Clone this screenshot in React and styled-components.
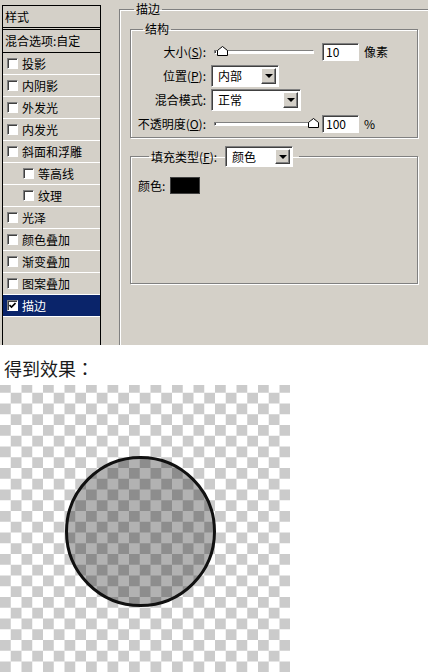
import styled, { createGlobalStyle } from 'styled-components';

const GlobalStyle = createGlobalStyle`
  html, body {
    margin: 0;
    padding: 0;
    background: #fff;
  }
  body {
    font-family: "Noto Sans CJK SC", "Noto Sans", sans-serif;
  }
  * {
    box-sizing: border-box;
  }
`;

const Page = styled.div`
  width: 428px;
  height: 672px;
  overflow: hidden;
  background: #fff;
`;

/* ---- layer style dialog ---- */

const Dialog = styled.div`
  display: flex;
  align-items: flex-start;
  height: 345px;
  overflow: hidden;
  background: #d4d0c8;
  color: #000;
  font-size: 12px;
  line-height: 14px;
`;

const StyleList = styled.div`
  flex: none;
  width: 99px;
  height: 345px;
  margin: 5px 0 0 2px;
  border: 1px solid #000;
  border-bottom: 0;
`;

const ListHeader = styled.div`
  display: flex;
  align-items: center;
  height: ${(p) => (p.$double ? 24 : 23)}px;
  padding-left: 2px;
  border-bottom: ${(p) => (p.$double ? '3px double #000' : '1px solid #000')};
`;

const ListItem = styled.div`
  display: flex;
  align-items: center;
  gap: 4px;
  height: 22px;
  padding-left: ${(p) => (p.$indent ? 20 : 4)}px;
  border-bottom: 1px solid #fff;
  background: ${(p) => (p.$active ? '#0a246a' : 'transparent')};
  color: ${(p) => (p.$active ? '#fff' : '#000')};
`;

const CheckBox = styled.span`
  flex: none;
  display: flex;
  align-items: center;
  justify-content: center;
  width: 11px;
  height: 11px;
  background: #fff;
  border: 1px solid;
  border-color: #808080 #fff #fff #808080;
  box-shadow: inset 1px 1px 0 #404040;
`;

const Group = styled.fieldset`
  margin: 0;
  padding: 0;
  min-width: 0;
  border: 1px solid #808080;
  box-shadow: inset 1px 1px 0 #fff, 1px 1px 0 #fff;
`;

const GroupTitle = styled.legend`
  display: flex;
  align-items: center;
  gap: 8px;
  margin-left: ${(p) => p.$offset}px;
  padding: ${(p) => (p.$wide ? '0 6px 0 2px' : '0 2px')};
  line-height: 14px;
`;

const StrokeGroup = styled(Group)`
  flex: none;
  width: 340px;
  height: 380px;
  margin: 2px 0 0 18px;
  padding: 6px 0 0 10px;
`;

const StructureGroup = styled(Group)`
  width: 288px;
  padding-bottom: 1px;
`;

const FillGroup = styled(Group)`
  width: 288px;
  margin-top: 8px;
`;

const FieldGrid = styled.div`
  display: grid;
  grid-template-columns: 75px auto;
  grid-auto-rows: 24px;
  column-gap: 5px;
  align-items: center;
  padding-top: 4px;
`;

const Label = styled.span`
  text-align: right;
  white-space: nowrap;
`;

const Controls = styled.div`
  display: flex;
  align-items: center;
  gap: 5px;
`;

const Slider = styled.div`
  position: relative;
  display: flex;
  align-items: center;
  width: 106px;
  height: 14px;
  padding-left: 3px;
`;

const Track = styled.div`
  width: 100px;
  height: 4px;
  background: #fff;
  border: 1px solid;
  border-color: #808080 #fff #fff #808080;
  box-shadow: inset 1px 0 0 #404040;
`;

const Thumb = styled.svg`
  position: absolute;
  top: 1px;
  left: ${(p) => p.$pos}px;
`;

const NumberBox = styled.div`
  width: 37px;
  height: 18px;
  padding-left: 3px;
  background: #fff;
  border: 1px solid;
  border-color: #808080 #fff #fff #808080;
  box-shadow: inset 1px 1px 0 #404040;
  line-height: 16px;
`;

const Select = styled.div`
  display: flex;
  align-items: center;
  justify-content: space-between;
  width: ${(p) => p.$width}px;
  height: ${(p) => p.$height || 22}px;
  padding: 2px 2px 2px 6px;
  background: #fff;
  border: 1px solid;
  border-color: #808080 #fff #fff #808080;
  box-shadow: inset 1px 1px 0 #404040;
`;

const DropButton = styled.span`
  display: flex;
  align-items: center;
  justify-content: center;
  width: 15px;
  height: 100%;
  background: #d4d0c8;
  border: 1px solid;
  border-color: #fff #404040 #404040 #fff;
  box-shadow: inset -1px -1px 0 #808080;

  &::after {
    content: '';
    border-left: 4px solid transparent;
    border-right: 4px solid transparent;
    border-top: 4px solid #000;
  }
`;

const FillBody = styled.div`
  display: flex;
  align-items: flex-start;
  gap: 5px;
  height: 116px;
  padding: 10px 0 0 7px;
`;

const ColorLabel = styled.span`
  line-height: 17px;
`;

const Swatch = styled.div`
  width: 30px;
  height: 17px;
  background: #000;
  border: 1px solid #404040;
`;

/* ---- result preview ---- */

const Caption = styled.div`
  height: 40px;
  padding: 6px 0 0 4px;
  font-size: 18px;
  line-height: 34px;
  color: #1b1b1b;
`;

const Colon = styled.span`
  font-family: "Noto Sans CJK TC", "Noto Sans CJK SC", sans-serif;
`;

const Preview = styled.div`
  width: 290px;
  height: 287px;
  padding: 71px 0 0 65px;
  background-color: #fff;
  background-image: conic-gradient(#fff 25%, #cbcbcb 0 50%, #fff 0 75%, #cbcbcb 0);
  background-size: 21.5px 21.5px;
  background-position: 0 -3px;
`;

const Circle = styled.div`
  width: 151px;
  height: 151px;
  border-radius: 50%;
  border: 3px solid #111;
  background: rgba(0, 0, 0, 0.3);
`;

const effects = [
  { name: '投影' },
  { name: '内阴影' },
  { name: '外发光' },
  { name: '内发光' },
  { name: '斜面和浮雕' },
  { name: '等高线', indent: true },
  { name: '纹理', indent: true },
  { name: '光泽' },
  { name: '颜色叠加' },
  { name: '渐变叠加' },
  { name: '图案叠加' },
  { name: '描边', checked: true },
];

const SliderThumb = ({ pos }) => (
  <Thumb $pos={pos} width="11" height="10" viewBox="0 0 11 10">
    <path d="M0.5 9.5 V4.5 L5.5 0.5 L10.5 4.5 V9.5 Z" fill="#fff" stroke="#000" />
    <path d="M1.5 8.5 V5 L5.5 1.8" fill="none" stroke="#fff" />
  </Thumb>
);

const Check = () => (
  <svg width="7" height="7" viewBox="0 0 7 7">
    <path d="M0.5 3 L2.5 5 L6.5 1" fill="none" stroke="#000" strokeWidth="1.6" />
  </svg>
);

export default function App() {
  return (
    <Page>
      <GlobalStyle />
      <Dialog>
        <StyleList>
          <ListHeader $double>样式</ListHeader>
          <ListHeader>混合选项:自定</ListHeader>
          {effects.map((fx) => (
            <ListItem key={fx.name} $indent={fx.indent} $active={fx.checked}>
              <CheckBox>{fx.checked && <Check />}</CheckBox>
              {fx.name}
            </ListItem>
          ))}
        </StyleList>

        <StrokeGroup>
          <GroupTitle $offset={4}>描边</GroupTitle>

          <StructureGroup>
            <GroupTitle $offset={12}>结构</GroupTitle>
            <FieldGrid>
              <Label>
                大小(<u>S</u>):
              </Label>
              <Controls>
                <Slider>
                  <Track />
                  <SliderThumb pos={6} />
                </Slider>
                <NumberBox>10</NumberBox>
                <span>像素</span>
              </Controls>

              <Label>
                位置(<u>P</u>):
              </Label>
              <Controls>
                <Select $width={68}>
                  内部
                  <DropButton />
                </Select>
              </Controls>

              <Label>混合模式:</Label>
              <Controls>
                <Select $width={90}>
                  正常
                  <DropButton />
                </Select>
              </Controls>

              <Label>
                不透明度(<u>O</u>):
              </Label>
              <Controls>
                <Slider>
                  <Track />
                  <SliderThumb pos={97} />
                </Slider>
                <NumberBox>100</NumberBox>
                <span>%</span>
              </Controls>
            </FieldGrid>
          </StructureGroup>

          <FillGroup>
            <GroupTitle $offset={18} $wide>
              <span>
                填充类型(<u>F</u>):
              </span>
              <Select $width={68} $height={21}>
                颜色
                <DropButton />
              </Select>
            </GroupTitle>
            <FillBody>
              <ColorLabel>颜色:</ColorLabel>
              <Swatch />
            </FillBody>
          </FillGroup>
        </StrokeGroup>
      </Dialog>

      <Caption>
        得到效果<Colon>：</Colon>
      </Caption>
      <Preview>
        <Circle />
      </Preview>
    </Page>
  );
}
